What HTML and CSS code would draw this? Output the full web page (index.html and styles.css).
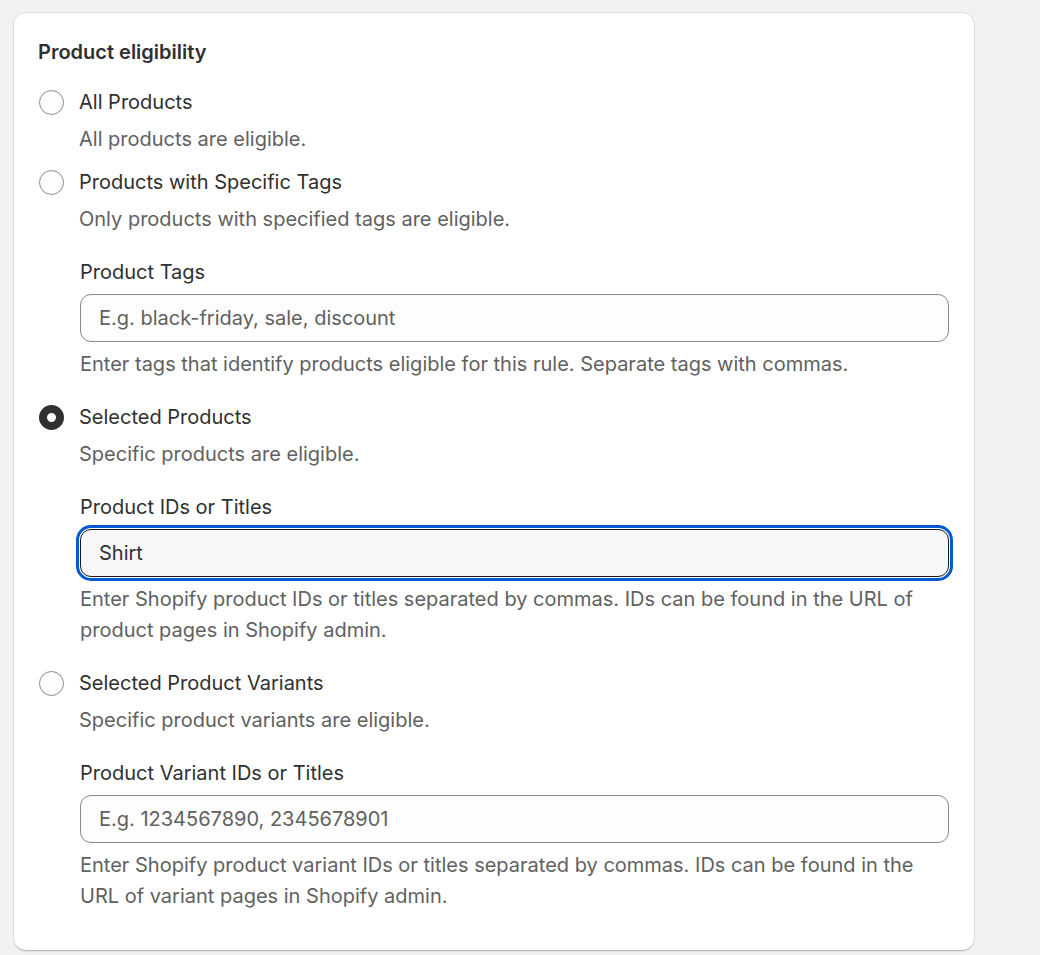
FILE: index.html
```html
<!DOCTYPE html>
<html lang="en">
<head>
    <meta charset="UTF-8">
    <meta name="viewport" content="width=device-width, initial-scale=1.0">
    <title>Product eligibility</title>
    <link rel="stylesheet" href="styles.css">
</head>
<body>
    <div class="card">
        <h2 class="card-title">Product eligibility</h2>
        <ul class="choice-list">
            <li class="choice">
                <label class="choice-row">
                    <input type="radio" name="eligibility" class="radio">
                    <span>All Products</span>
                </label>
                <p class="choice-help">All products are eligible.</p>
            </li>
            <li class="choice">
                <label class="choice-row">
                    <input type="radio" name="eligibility" class="radio">
                    <span>Products with Specific Tags</span>
                </label>
                <p class="choice-help">Only products with specified tags are eligible.</p>
                <div class="field">
                    <label class="field-label" for="tags">Product Tags</label>
                    <input id="tags" class="text-input" type="text" placeholder="E.g. black-friday, sale, discount">
                    <p class="field-help">Enter tags that identify products eligible for this rule. Separate tags with commas.</p>
                </div>
            </li>
            <li class="choice">
                <label class="choice-row">
                    <input type="radio" name="eligibility" class="radio" checked>
                    <span>Selected Products</span>
                </label>
                <p class="choice-help">Specific products are eligible.</p>
                <div class="field">
                    <label class="field-label" for="products">Product IDs or Titles</label>
                    <input id="products" class="text-input focused" type="text" value="Shirt">
                    <p class="field-help">Enter Shopify product IDs or titles separated by commas. IDs can be found in the URL of product pages in Shopify admin.</p>
                </div>
            </li>
            <li class="choice">
                <label class="choice-row">
                    <input type="radio" name="eligibility" class="radio">
                    <span>Selected Product Variants</span>
                </label>
                <p class="choice-help">Specific product variants are eligible.</p>
                <div class="field">
                    <label class="field-label" for="variants">Product Variant IDs or Titles</label>
                    <input id="variants" class="text-input" type="text" placeholder="E.g. 1234567890, 2345678901">
                    <p class="field-help">Enter Shopify product variant IDs or titles separated by commas. IDs can be found in the URL of variant pages in Shopify admin.</p>
                </div>
            </li>
        </ul>
    </div>
</body>
</html>
```

FILE: styles.css
```css
body {
    font-family: Inter, "Noto Sans", sans-serif;
    background-color: #f1f2f4;
    color: #303030;
    margin: 0;
    padding: 13px 14px;
}
.card {
    width: 960px;
    box-sizing: border-box;
    background-color: #fff;
    border-radius: 12px;
    padding: 25px 25px 30px 24px;
    box-shadow: 0 0 0 1px rgba(0, 0, 0, 0.08), 0 2px 2px -1px rgba(0, 0, 0, 0.22);
}
.card-title {
    font-size: 20px;
    font-weight: 600;
    line-height: 28px;
    margin: 0 0 22px;
}
.choice-list {
    list-style: none;
    margin: 0;
    padding: 0;
    display: flex;
    flex-direction: column;
    gap: 15px;
}
.choice-row {
    display: flex;
    align-items: center;
    gap: 15px;
    font-size: 20px;
    line-height: 28px;
    cursor: pointer;
}
.radio {
    appearance: none;
    width: 25px;
    height: 25px;
    margin: 0 0 0 1px;
    box-sizing: border-box;
    border: 1px solid #8a8a8a;
    border-radius: 50%;
    background-color: #fdfdfd;
    flex-shrink: 0;
}
.radio:checked {
    border: 8px solid #303030;
    background-color: #fff;
}
.choice-help {
    margin: 9px 0 0 41px;
    font-size: 20px;
    line-height: 28px;
    color: #616161;
}
.field {
    margin: 25px 0 0 42px;
    padding-bottom: 8px;
}
.field-label {
    display: block;
    font-size: 20px;
    line-height: 28px;
    margin-bottom: 8px;
}
.text-input {
    display: block;
    width: 100%;
    height: 48px;
    box-sizing: border-box;
    padding: 0 18px;
    font-family: inherit;
    font-size: 20px;
    color: #303030;
    background-color: #fdfdfd;
    border: 1px solid #8a8a8a;
    border-radius: 11px;
}
.text-input::placeholder {
    color: #616161;
}
.text-input.focused {
    background-color: #f7f7f7;
    border-color: #1a1a1a;
    outline: 3px solid #005bd3;
    outline-offset: 1px;
}
.field-help {
    margin: 7px 0 0;
    font-size: 20px;
    line-height: 31px;
    color: #616161;
}
```
